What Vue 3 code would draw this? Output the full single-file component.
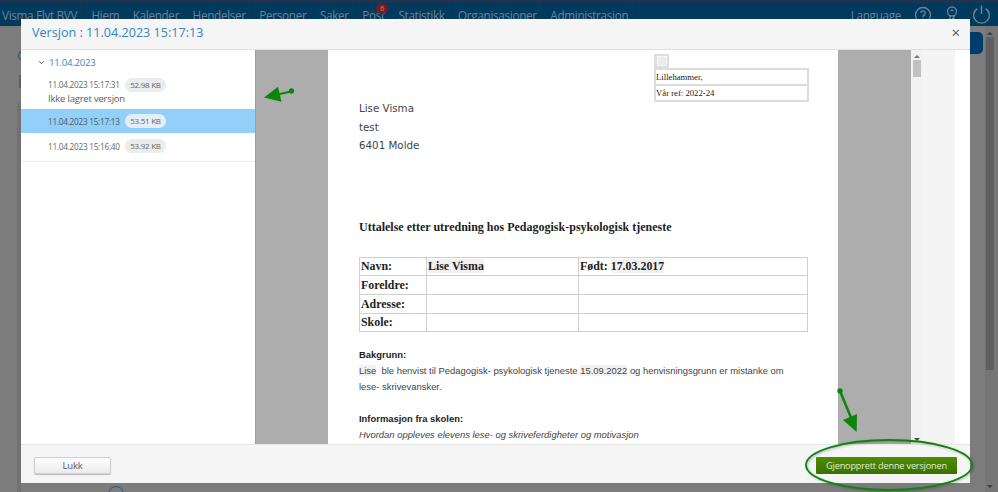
<script setup>
const navItems = ['Hiem', 'Kalender', 'Hendelser', 'Personer', 'Saker', 'Post', 'Statistikk', 'Organisasjoner', 'Administrasjon']

const versions = [
  { id: 1, time: '11.04.2023 15:17:31', size: '52.98 KB', note: 'Ikke lagret versjon' },
  { id: 2, time: '11.04.2023 15:17:13', size: '53.51 KB', selected: true },
  { id: 3, time: '11.04.2023 15:16:40', size: '53.92 KB' }
]

const rows = [
  { label: 'Navn:', name: 'Lise Visma', born: '17.03.2017' },
  { label: 'Foreldre:' },
  { label: 'Adresse:' },
  { label: 'Skole:' }
]
</script>

<template>
  <div class="page">
    <!-- toppmeny bak modalen -->
    <div class="topline"></div>
    <nav class="nav">
      <span class="brand">Visma Flyt BVV</span>
      <span v-for="item in navItems" :key="item" class="nav-item">
        {{ item }}
        <b v-if="item === 'Post'" class="badge">6</b>
      </span>
      <span class="nav-right">
        <span class="lang">Language</span>
        <svg class="nav-icon" viewBox="0 0 20 20" fill="none" stroke="#6d8498" stroke-width="1.3">
          <circle cx="10" cy="10" r="7.5" />
          <path d="M7.8 8a2.2 2.2 0 1 1 3.4 1.9c-.8.5-1.2 1-1.2 2" />
          <path d="M10 13.4v1.2" />
        </svg>
        <svg class="nav-icon" viewBox="0 0 20 20" fill="none" stroke="#6d8498" stroke-width="1.3">
          <circle cx="10" cy="6.5" r="4.5" />
          <path d="M8 10.5v7h4v-2.5h-1.5v-1.5h1.5v-3M8.5 5.5h3" />
        </svg>
        <svg class="nav-icon power" viewBox="0 0 20 20" fill="none" stroke="#6d8498" stroke-width="1.3">
          <path d="M6 4.4a7.5 7.5 0 1 0 8 0" />
          <path d="M10 1.5v8" />
        </svg>
      </span>
    </nav>

    <div class="behind">
      <div class="behind-left">
        <span class="back-link">C</span>
        <span class="dark-block"></span>
        <span class="left-strip"></span>
      </div>
      <div class="behind-right">
        <span class="blue-btn"></span>
        <div class="page-scroll">
          <span class="scroll-up"></span>
          <span class="page-thumb"></span>
          <span class="scroll-down"></span>
        </div>
      </div>
    </div>

    <div class="under-circle"></div>

    <!-- modal -->
    <section class="modal">
      <header class="modal-head">
        <h1>Versjon : 11.04.2023 15:17:13</h1>
        <span class="close">×</span>
      </header>

      <div class="modal-body">
        <aside class="versions">
          <div class="date-row">
            <svg class="chevron" viewBox="0 0 8 6" fill="none" stroke="#555" stroke-width="1.2">
              <path d="M1 1.5l3 3 3-3" />
            </svg>
            11.04.2023
          </div>
          <div
            v-for="v in versions"
            :key="v.id"
            class="version"
            :class="{ selected: v.selected, 'has-note': v.note }"
          >
            <div class="version-line">
              <span class="time">{{ v.time }}</span>
              <span class="size">{{ v.size }}</span>
            </div>
            <div v-if="v.note" class="note">{{ v.note }}</div>
          </div>
        </aside>

        <div class="viewer">
          <div class="sheet-area">
            <article class="sheet">
              <div class="ref-wrap">
                <span class="ref-handle"><i></i></span>
                <div class="ref-box">
                  <div class="ref-row">Lillehammer,</div>
                  <div class="ref-row">Vår ref: 2022-24</div>
                </div>
              </div>

              <div class="address">
                <div>Lise Visma</div>
                <div>test</div>
                <div>6401 Molde</div>
              </div>

              <h2>Uttalelse etter utredning hos Pedagogisk-psykologisk tjeneste</h2>

              <table class="info">
                <tbody>
                  <tr v-for="r in rows" :key="r.label">
                    <td class="c1">{{ r.label }}</td>
                    <td class="c2"><mark v-if="r.name">{{ r.name }}</mark></td>
                    <td class="c3"><template v-if="r.born">Født: <mark>{{ r.born }}</mark></template></td>
                  </tr>
                </tbody>
              </table>

              <div class="para">
                <strong>Bakgrunn:</strong>
                <p><mark>Lise</mark>&nbsp; ble henvist til Pedagogisk- psykologisk tjeneste <mark>15.09.2022</mark> og henvisningsgrunn er mistanke om<br>lese- skrivevansker.</p>
              </div>
              <div class="para second">
                <strong>Informasjon fra skolen:</strong>
                <p><em>Hvordan oppleves elevens lese- og skriveferdigheter og motivasjon</em></p>
              </div>
            </article>
          </div>
          <div class="doc-scroll">
            <span class="scroll-up dark"></span>
            <span class="doc-thumb"></span>
            <span class="scroll-down dark"></span>
          </div>
          <div class="viewer-gutter"></div>
        </div>
        <div class="modal-margin"></div>
      </div>

      <footer class="modal-foot">
        <button class="btn-close">Lukk</button>
        <button class="btn-restore">Gjenopprett denne versjonen</button>
      </footer>
    </section>

    <!-- grønne markeringer oppå skjermbildet -->
    <svg class="marks" viewBox="0 0 998 492">
      <g fill="#0b860b" stroke="#0b860b">
        <circle cx="291.5" cy="91" r="2.7" stroke="none" />
        <path d="M291 91.5L275 95" stroke-width="2" />
        <path d="M264 97.5L278 86.7L281.5 101.7z" stroke="none" />
        <circle cx="840" cy="391" r="2.7" stroke="none" />
        <path d="M840 391L852 420" stroke-width="2.5" />
        <path d="M856.7 432L843 420L857 414z" stroke="none" />
      </g>
      <ellipse class="ring" cx="889" cy="465" rx="83" ry="25" fill="none" stroke="#0b860b" stroke-width="1.8" />
    </svg>
  </div>
</template>

<style scoped>
.page {
  position: relative;
  width: 998px;
  height: 492px;
  overflow: hidden;
  background: #7c7c7c;
  font-family: "Open Sans", "Noto Sans", sans-serif;
}

.topline {
  height: 3px;
  background: #1d3555;
}

.nav {
  display: flex;
  align-items: flex-start;
  height: 23px;
  background: #023a5e;
  color: #6d8498;
  font-size: 11.7px;
  letter-spacing: -0.3px;
  line-height: 24px;
  white-space: nowrap;
}
.brand {
  padding: 0 7px 0 2px;
  border-right: 1px solid #0a3350;
  height: 23px;
}
.nav-item {
  position: relative;
  padding: 0 6.25px;
  border-right: 1px solid #0a3350;
  height: 23px;
}
.badge {
  position: absolute;
  top: 1px;
  right: 3px;
  width: 12px;
  height: 10px;
  border-radius: 6px;
  background: #7b1a1e;
  color: #c98b8b;
  font-size: 7px;
  line-height: 10px;
  font-weight: 400;
  text-align: center;
}
.nav-right {
  display: flex;
  margin-left: auto;
  align-items: center;
  height: 23px;
}
.lang {
  margin-right: 12px;
}
.nav-icon {
  width: 20px;
  height: 20px;
  margin: 0 9px 0 0;
}
.power {
  width: 21px;
  height: 21px;
  margin: 0 6px 0 0;
}

.behind {
  display: flex;
  justify-content: space-between;
  height: 466px;
}
.behind-left {
  display: flex;
  flex-direction: column;
  padding: 20px 0 0 17px;
}
.back-link {
  color: #285a80;
  font-size: 13px;
  line-height: 18px;
}
.dark-block {
  width: 4px;
  height: 13px;
  margin: 11px 0 0 2px;
  background: #606060;
}
.left-strip {
  flex: 1;
  width: 4px;
  margin-top: 14px;
  background: #717171;
}
.behind-right {
  display: flex;
  align-items: flex-start;
}
.blue-btn {
  width: 13px;
  height: 22px;
  margin: 6px 2px 0 0;
  border-radius: 0 5px 5px 0;
  background: #003c6b;
}
.page-scroll {
  display: flex;
  flex-direction: column;
  align-items: center;
  width: 13px;
  height: 466px;
  padding-right: 3px;
  box-sizing: border-box;
  background: #767676;
}
.page-thumb {
  width: 8px;
  height: 333px;
  margin-top: 2px;
  background: #5f5f5f;
}
.scroll-up,
.scroll-down {
  display: block;
  width: 0;
  height: 0;
  border-left: 3px solid transparent;
  border-right: 3px solid transparent;
}
.scroll-up {
  margin-top: 6px;
  border-bottom: 3px solid #3c3c3c;
}
.scroll-down {
  margin-top: auto;
  margin-bottom: 4px;
  border-top: 3px solid #3c3c3c;
}
.scroll-up.dark {
  margin-top: 5px;
  border-bottom-color: #777;
}
.scroll-down.dark {
  margin-bottom: 3px;
  border-top-color: #444;
}

.under-circle {
  position: absolute;
  left: 108px;
  top: 485.5px;
  width: 14px;
  height: 14px;
  border: 1.5px solid #1d5a86;
  border-radius: 50%;
}

.modal {
  position: absolute;
  left: 21px;
  top: 19px;
  display: flex;
  flex-direction: column;
  width: 949px;
  height: 464px;
  background: #fff;
}
.modal-head {
  display: flex;
  align-items: center;
  justify-content: space-between;
  height: 31px;
  flex: none;
  padding: 0 10px 3px 11px;
  box-sizing: border-box;
  background: #f5f5f5;
  border-bottom: 1px solid #dfdfdf;
}
.modal-head h1 {
  margin: 0;
  color: #3585c0;
  font-size: 12.6px;
  font-weight: 400;
}
.close {
  color: #555;
  font-size: 15px;
  line-height: 15px;
}

.modal-body {
  display: flex;
  height: 394px;
  flex: none;
}
.versions {
  width: 234px;
  flex: none;
  height: 111px;
  border-bottom: 1px solid #eee;
  color: #555;
}
.date-row {
  display: flex;
  align-items: center;
  height: 25px;
  padding-left: 17px;
  color: #3a87c2;
  font-size: 9.6px;
  letter-spacing: -0.25px;
}
.chevron {
  width: 7px;
  height: 5px;
  margin-right: 4px;
}
.version {
  display: flex;
  flex-direction: column;
  justify-content: center;
  padding-left: 27px;
}
.version.has-note {
  height: 34px;
  padding-bottom: 1px;
  box-sizing: border-box;
}
.version.selected {
  height: 24px;
  background: #92cff9;
}
.version:last-child {
  height: 29px;
  justify-content: flex-start;
  padding-top: 6px;
  box-sizing: border-box;
}
.version-line {
  display: flex;
  align-items: center;
  gap: 5px;
}
.time {
  font-size: 8.2px;
  letter-spacing: -0.24px;
  color: #666;
}
.selected .time {
  color: #4b5a66;
}
.size {
  padding: 0 5.5px;
  border-radius: 7px;
  background: #ececec;
  color: #666;
  font-size: 8px;
  letter-spacing: -0.25px;
  line-height: 14px;
}
.selected .size {
  background: #e3eef7;
}
.note {
  font-size: 9.5px;
  letter-spacing: -0.2px;
  line-height: 14px;
  color: #5c5c5c;
}

.viewer {
  display: flex;
  flex: none;
  width: 700px;
  height: 394px;
  overflow: hidden;
}
.sheet-area {
  display: flex;
  justify-content: center;
  width: 656px;
  flex: none;
  overflow: hidden;
  background: #adadad;
  box-shadow: inset 1px 0 0 #9d9d9d;
}
.sheet {
  flex: none;
  width: 510px;
  height: 394px;
  box-sizing: border-box;
  padding: 4px 30px 0 31px;
  background: #fff;
  overflow: hidden;
}
.ref-wrap {
  display: flex;
  flex-direction: column;
  align-items: flex-start;
  margin-left: 295px;
  width: 155px;
}
.ref-handle {
  display: flex;
  align-items: center;
  justify-content: center;
  width: 15px;
  height: 14px;
  background: #dedede;
}
.ref-handle i {
  width: 10px;
  height: 10px;
  background: #ececec;
  border: 1px dotted #fff;
  box-sizing: border-box;
}
.ref-box {
  width: 155px;
  box-sizing: border-box;
  border: 2px solid #dcdcdc;
  background: #fff;
  font-family: "Liberation Serif", serif;
  font-size: 8.7px;
  color: #222;
}
.ref-row {
  height: 14px;
  line-height: 14px;
}
.ref-row + .ref-row {
  border-top: 2px solid #dcdcdc;
}

.address {
  margin-top: -3px;
  font-family: "DejaVu Sans", sans-serif;
  font-size: 10.3px;
  line-height: 18.5px;
  color: #444;
}

h2 {
  margin: 64px 0 0;
  font-family: "Liberation Serif", serif;
  font-size: 12px;
  line-height: 16px;
  font-weight: 700;
  color: #1e1e1e;
}

.info {
  width: 449px;
  margin-top: 22px;
  border-collapse: collapse;
  table-layout: fixed;
  font-family: "Liberation Serif", serif;
  font-size: 11.9px;
  font-weight: 700;
  color: #222;
}
.info td {
  height: 17.7px;
  padding: 0 1px;
  border: 1px solid #cfcfcf;
  line-height: 14px;
  white-space: nowrap;
}
.c1 {
  width: 64px;
}
.c2 {
  width: 149px;
}
mark {
  background: #f1f1f1;
  color: inherit;
}

.para {
  margin-top: 15px;
  font-family: "Liberation Sans", sans-serif;
  font-size: 9.42px;
  line-height: 16px;
  color: #333;
}
.para strong {
  display: block;
  color: #222;
  font-weight: 700;
}
.para p {
  margin: 0;
  color: #444;
}
.para.second {
  margin-top: 16px;
}

.doc-scroll {
  display: flex;
  flex-direction: column;
  align-items: center;
  width: 11px;
  flex: none;
  background: #f1f1f1;
}
.doc-thumb {
  width: 8px;
  height: 17px;
  margin-top: 2px;
  background: #c1c1c1;
}
.viewer-gutter {
  flex: 1;
  background: #f4f4f4;
}
.modal-margin {
  flex: 1;
}

.modal-foot {
  display: flex;
  align-items: center;
  justify-content: space-between;
  height: 39px;
  flex: none;
  padding: 3px 13px 0;
  box-sizing: border-box;
  background: #f5f5f5;
  border-top: 1px solid #e6e6e6;
}
.btn-close {
  width: 77px;
  height: 17px;
  padding: 0;
  border: 1px solid #cfcfcf;
  border-radius: 2px;
  background: linear-gradient(#fdfdfd, #ececec);
  box-shadow: 0 1px 1px #bbb;
  color: #58586e;
  font-family: inherit;
  font-size: 9.5px;
  letter-spacing: -0.2px;
  line-height: 14px;
}
.btn-restore {
  width: 141px;
  height: 17px;
  padding: 0;
  border: 0;
  border-radius: 1px;
  background: linear-gradient(#4f8c05, #3b7000);
  color: #e4eed2;
  font-family: inherit;
  font-size: 9.2px;
  letter-spacing: -0.2px;
  line-height: 17px;
  white-space: nowrap;
}

.marks {
  position: absolute;
  left: 0;
  top: 0;
  width: 998px;
  height: 492px;
  pointer-events: none;
}
.ring {
  filter: drop-shadow(1px 1px 1px rgba(0, 0, 0, 0.25));
}
</style>
